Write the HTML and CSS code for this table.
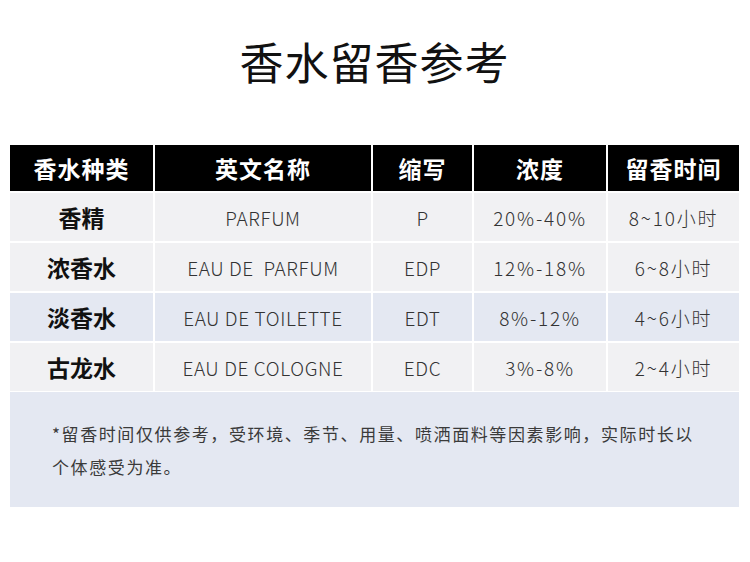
FILE: index.html
```html
<!DOCTYPE html>
<html lang="zh-CN">
<head>
<meta charset="utf-8">
<title>香水留香参考</title>
<link rel="stylesheet" href="styles.css">
</head>
<body>
<div class="page">
  <h1 class="title">香水留香参考</h1>
  <div class="table">
    <div class="cell head">香水种类</div>
    <div class="cell head">英文名称</div>
    <div class="cell head">缩写</div>
    <div class="cell head">浓度</div>
    <div class="cell head">留香时间</div>

    <div class="cell kind gray">香精</div>
    <div class="cell val en gray">PARFUM</div>
    <div class="cell val en gray">P</div>
    <div class="cell val num gray">20%-40%</div>
    <div class="cell val num gray">8~10小时</div>

    <div class="cell kind gray">浓香水</div>
    <div class="cell val en gray">EAU DE&nbsp; PARFUM</div>
    <div class="cell val en gray">EDP</div>
    <div class="cell val num gray">12%-18%</div>
    <div class="cell val num gray">6~8小时</div>

    <div class="cell kind blue">淡香水</div>
    <div class="cell val en blue">EAU DE TOILETTE</div>
    <div class="cell val en blue">EDT</div>
    <div class="cell val num blue">8%-12%</div>
    <div class="cell val num blue">4~6小时</div>

    <div class="cell kind gray">古龙水</div>
    <div class="cell val en gray">EAU DE COLOGNE</div>
    <div class="cell val en gray">EDC</div>
    <div class="cell val num gray">3%-8%</div>
    <div class="cell val num gray">2~4小时</div>
  </div>
  <div class="note">*留香时间仅供参考，受环境、季节、用量、喷洒面料等因素影响，实际时长以个体感受为准。</div>
</div>
</body>
</html>
```
FILE: styles.css
```css
html, body {
  margin: 0;
  padding: 0;
  background: #ffffff;
}
body {
  font-family: "Noto Sans CJK SC", "Noto Sans", sans-serif;
  width: 750px;
  height: 562px;
  overflow: hidden;
}
.page {
  padding: 0 11px 0 10px;
}
.title {
  margin: 0;
  height: 145px;
  box-sizing: border-box;
  padding-top: 33px;
  font-size: 44px;
  line-height: 56px;
  font-weight: 400;
  color: #111;
  text-align: center;
  letter-spacing: 1px;
}
.table {
  display: grid;
  grid-template-columns: 143px 216px 99px 132px 131px;
  grid-template-rows: 46px 48px 48px 48px 48px;
  gap: 2px;
  background: #ffffff;
}
.cell {
  display: flex;
  align-items: center;
  justify-content: center;
}
.head {
  background: #000;
  color: #fff;
  font-size: 23px;
  font-weight: 700;
  letter-spacing: 1px;
}
.gray { background: #f1f1f3; }
.blue { background: #e4e8f2; }
.kind {
  font-size: 23px;
  font-weight: 700;
  color: #111;
}
.val {
  font-size: 19px;
  font-weight: 300;
  color: #333;
}
.en {
  letter-spacing: 0.6px;
}
.num {
  letter-spacing: 1.8px;
}
.note {
  margin-top: 1px;
  height: 115px;
  box-sizing: border-box;
  background: #e4e8f2;
  padding: 25px 40px 0 42px;
  font-size: 17px;
  line-height: 33px;
  color: #3a3a3a;
  letter-spacing: 1.6px;
}
```
